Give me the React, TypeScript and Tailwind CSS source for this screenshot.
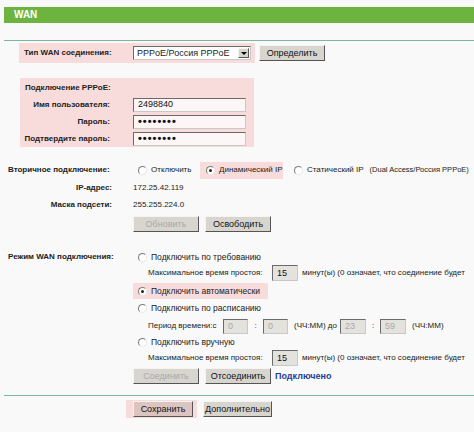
import React from "react";

const Radio = ({ checked = false }: { checked?: boolean }) => (
  <span className="relative inline-block w-[9px] h-[9px] rounded-full bg-white border border-t-[#7a7a7a] border-l-[#7a7a7a] border-r-[#e8e8e8] border-b-[#e8e8e8] shrink-0">
    {checked && <span className="absolute left-[2px] top-[2px] w-[3px] h-[3px] rounded-full bg-[#222]" />}
  </span>
);

const Btn = ({ children, w, disabled = false, pink = false }: { children: React.ReactNode; w: string; disabled?: boolean; pink?: boolean }) => (
  <div
    className={`${w} shrink-0 h-[16px] flex items-center justify-center border border-t-[#f4f4f4] border-l-[#f4f4f4] border-r-[#555] border-b-[#555] ${pink ? "bg-[#dcc4c0]" : "bg-[#d8d5cf]"} ${disabled ? "text-[#a8a8a8]" : "text-[#111]"} text-[9px] leading-none`}
  >
    {children}
  </div>
);

const Field = ({ w, h = "h-[15px]", children, disabled = false, bg = "bg-[#e4e2dc]" }: { w: string; h?: string; children?: React.ReactNode; disabled?: boolean; bg?: string }) => (
  <div
    className={`${w} ${h} shrink-0 ${bg} border border-t-[#6a6a6a] border-l-[#6a6a6a] border-r-[#c8c8c8] border-b-[#c8c8c8] flex items-center pl-[4px] ${disabled ? "text-[#a8a8a8]" : "text-[#111]"} text-[9px] leading-none`}
  >
    {children}
  </div>
);

export default function App() {
  return (
    <div
      className="w-[474px] h-[432px] overflow-hidden bg-[#f8f9f8] text-[#222] text-[8px] leading-none"
      style={{ fontFamily: '"Liberation Sans", Arial, sans-serif' }}
    >
      {/* header */}
      <div className="pt-[7px] pl-[4px]">
        <div className="h-[16px] bg-[#6cb33f] flex items-center pl-[10px] text-white font-bold text-[10px]">WAN</div>
      </div>
      <div className="h-[17px]" />
      <div className="ml-[4px] h-px bg-[#7db4a2]" />
      <div className="h-[2px]" />

      {/* row 1 */}
      <div className="flex items-center h-[20px]">
        <div className="ml-[19px] w-[236px] shrink-0 h-[20px] bg-[#f8dcdc] flex items-center">
          <div className="w-[114px] shrink-0 pl-[5px] font-bold">Тип WAN соединения:</div>
          <div className="w-[118px] shrink-0 h-[14px] bg-white border border-t-[#6a6a6a] border-l-[#6a6a6a] border-r-[#c8c8c8] border-b-[#c8c8c8] flex items-center justify-between pl-[3px] pr-[1px] text-[9px]">
            <span>PPPoE/Россия PPPoE</span>
            <span className="w-[11px] h-[10px] bg-[#d8d5cf] border border-t-[#f4f4f4] border-l-[#f4f4f4] border-r-[#555] border-b-[#555] flex items-center justify-center">
              <span className="w-0 h-0 border-l-[3px] border-r-[3px] border-t-[3px] border-l-transparent border-r-transparent border-t-black" />
            </span>
          </div>
        </div>
        <div className="ml-[4px]">
          <Btn w="w-[66px]">Определить</Btn>
        </div>
      </div>

      <div className="h-[15px]" />

      {/* PPPoE block */}
      <div className="ml-[20px] w-[234px] h-[69px] bg-[#f8dcdc] pt-[2px]">
        <div className="h-[16px] flex items-center pl-[5px] font-bold">Подключение PPPoE:</div>
        {[
          ["Имя пользователя:", "2498840"],
          ["Пароль:", "••••••••"],
          ["Подтвердите пароль:", "••••••••"],
        ].map(([l, v], i) => (
          <div key={i} className="h-[17px] flex items-center">
            <div className="w-[90px] shrink-0 text-right font-bold">{l}</div>
            <div className="ml-[23px]">
              <Field w="w-[113px]" h="h-[14px]" bg="bg-[#fcf6f6]">
                <span className={i > 0 ? "font-bold text-[11px] tracking-[1px]" : ""}>{v}</span>
              </Field>
            </div>
          </div>
        ))}
      </div>

      <div className="h-[14px]" />

      {/* secondary */}
      <div className="h-[18px] flex items-center whitespace-nowrap">
        <div className="w-[133px] shrink-0 pl-[8px] font-bold">Вторичное подключение:</div>
        <div className="w-[67px] shrink-0 flex items-center pl-[5px] gap-[4px]">
          <Radio />
          <span>Отключить</span>
        </div>
        <div className="w-[83px] shrink-0 h-[17px] bg-[#f8dcdc] flex items-center pl-[6px] gap-[4px]">
          <Radio checked />
          <span>Динамический IP</span>
        </div>
        <div className="shrink-0 flex items-center pl-[11px] gap-[4px]">
          <Radio />
          <span>Статический IP</span>
        </div>
        <span className="shrink-0 ml-[6px] text-[7.5px]">(Dual Access/Россия PPPoE)</span>
      </div>

      <div className="h-[17px] flex items-center">
        <div className="w-[112px] shrink-0 text-right font-bold">IP-адрес:</div>
        <div className="ml-[21px]">172.25.42.119</div>
      </div>
      <div className="h-[18px] flex items-center">
        <div className="w-[112px] shrink-0 text-right font-bold">Маска подсети:</div>
        <div className="ml-[21px]">255.255.224.0</div>
      </div>
      <div className="h-[2px]" />
      <div className="h-[16px] flex items-center pl-[133px] gap-[6px]">
        <Btn w="w-[66px]" disabled>Обновить</Btn>
        <Btn w="w-[66px]">Освободить</Btn>
      </div>

      <div className="h-[17px]" />

      {/* WAN mode */}
      <div className="h-[16px] flex items-center whitespace-nowrap">
        <div className="w-[133px] shrink-0 pl-[8px] font-bold">Режим WAN подключения:</div>
        <div className="flex items-center pl-[5px] gap-[4px] text-[8.5px]">
          <Radio />
          <span>Подключить по требованию</span>
        </div>
      </div>
      <div className="h-[16px] flex items-center whitespace-nowrap pl-[148px]">
        <span className="w-[124px] shrink-0">Максимальное время простоя:</span>
        <Field w="w-[26px]" h="h-[16px]">15</Field>
        <span className="ml-[4px] shrink-0">минут(ы) (0 означает, что соединение будет</span>
      </div>
      <div className="h-[2px]" />
      <div className="h-[16px] flex items-center">
        <div className="ml-[133px] w-[135px] shrink-0 h-[16px] bg-[#f8dcdc] flex items-center pl-[5px] gap-[4px] text-[8.5px]">
          <Radio checked />
          <span>Подключить автоматически</span>
        </div>
      </div>
      <div className="h-[19px] flex items-center pl-[138px] gap-[4px] text-[8.5px]">
        <Radio />
        <span>Подключить по расписанию</span>
      </div>
      <div className="h-[16px] flex items-center whitespace-nowrap pl-[148px]">
        <span className="w-[75px] shrink-0">Период времени:с</span>
        <Field w="w-[25px]" disabled>0</Field>
        <span className="w-[15px] shrink-0 text-center">:</span>
        <Field w="w-[25px]" disabled>0</Field>
        <span className="ml-[6px] w-[46px] shrink-0">(ЧЧ:ММ) до</span>
        <Field w="w-[26px]" disabled>23</Field>
        <span className="w-[14px] shrink-0 text-center">:</span>
        <Field w="w-[26px]" disabled>59</Field>
        <span className="ml-[6px] shrink-0">(ЧЧ:ММ)</span>
      </div>
      <div className="h-[16px] flex items-center pl-[138px] gap-[4px] text-[8.5px]">
        <Radio />
        <span>Подключить вручную</span>
      </div>
      <div className="h-[16px] flex items-center whitespace-nowrap pl-[148px]">
        <span className="w-[124px] shrink-0">Максимальное время простоя:</span>
        <Field w="w-[26px]" h="h-[16px]">15</Field>
        <span className="ml-[4px] shrink-0">минут(ы) (0 означает, что соединение будет</span>
      </div>
      <div className="h-[2px]" />
      <div className="h-[16px] flex items-center pl-[133px] gap-[6px]">
        <Btn w="w-[66px]" disabled>Соединить</Btn>
        <Btn w="w-[66px]">Отсоединить</Btn>
        <span className="ml-[-2px] font-bold text-[#1f3c98] text-[9px]">Подключено</span>
      </div>

      <div className="h-[11px]" />
      <div className="ml-[4px] h-px bg-[#7db4a2]" />
      <div className="h-[4px]" />

      <div className="flex items-center">
        <div className="ml-[126px] h-[18px] bg-[#f8dcdc] flex items-center pl-[7px] pr-[4px]">
          <Btn w="w-[60px]" pink>Сохранить</Btn>
        </div>
        <div className="ml-[6px]">
          <Btn w="w-[69px]">Дополнительно</Btn>
        </div>
      </div>
    </div>
  );
}
